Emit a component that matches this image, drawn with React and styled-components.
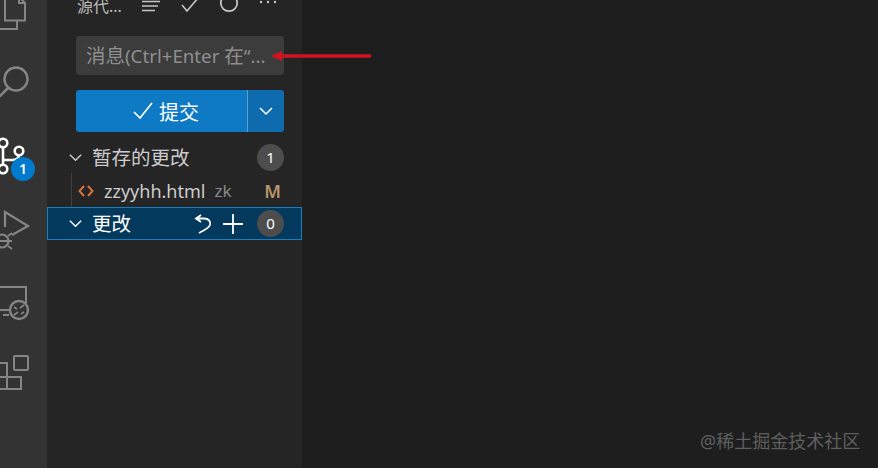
import React from "react";
import styled, { createGlobalStyle } from "styled-components";

const GlobalStyle = createGlobalStyle`
  html, body {
    margin: 0;
    padding: 0;
    height: 100%;
    background: #1e1e1e;
    overflow: hidden;
  }
  #root {
    height: 100%;
  }
`;

const FONT = `"Noto Sans", "Noto Sans CJK SC", sans-serif`;

function ActivityIcon({ height, children }) {
  return (
    <ActivitySvg width="47" height={height} viewBox={`0 0 47 ${height}`} fill="none" stroke="currentColor">
      {children}
    </ActivitySvg>
  );
}

function App() {
  return (
    <>
      <GlobalStyle />
      <Page>
        <ActivityBar>
          <ActivityItem>
            <ActivityIcon height={40}>
              <g strokeWidth="2">
                <path d="M-2 29H17V21" />
                <path d="M5 -3V20.500H25V3L19 -3M19 -3V3H25" />
              </g>
            </ActivityIcon>
          </ActivityItem>
          <ActivityItem>
            <ActivityIcon height={73}>
              <circle cx="16" cy="39" r="11.5" strokeWidth="2.4" />
              <path strokeWidth="2.6" d="M8 48L-2 58" />
            </ActivityIcon>
          </ActivityItem>
          <ActivityItem $active>
            <ActivityIcon height={80}>
              <g strokeWidth="2.6">
                <circle cx="3" cy="30" r="4.300" />
                <circle cx="3" cy="56" r="4.300" />
                <circle cx="19" cy="38" r="4.300" />
                <path d="M3 34V52M3 47H12C16 47 19 45 19 42" />
              </g>
            </ActivityIcon>
            <Badge>1</Badge>
          </ActivityItem>
          <ActivityItem>
            <ActivityIcon height={76}>
              <g strokeWidth="2.200">
                <path d="M5 34V19L28 33L12 42" />
                <circle cx="2" cy="48" r="6.500" />
                <path strokeWidth="1.800" d="M-4 48H12M8 43L12 40M8 53L12 56" />
              </g>
            </ActivityIcon>
          </ActivityItem>
          <ActivityItem>
            <ActivityIcon height={70}>
              <g strokeWidth="2">
                <path d="M-2 18H26V35M-2 41H9M3 46H9" />
                <circle cx="19" cy="41" r="9" strokeWidth="2.400" />
                <path strokeWidth="1.600" d="M20 39L24 36M18 43L14 46M14 38L17 40M24 43L21 45" />
              </g>
            </ActivityIcon>
          </ActivityItem>
          <ActivityItem>
            <ActivityIcon height={70}>
              <g strokeWidth="2">
                <rect x="14" y="17" width="14" height="14" rx="1" />
                <path d="M-2 24H7V50M-2 38H21V50H-2" />
              </g>
            </ActivityIcon>
          </ActivityItem>
        </ActivityBar>

        <SideBar>
          <Header>
            <HeaderTitle>源代...</HeaderTitle>
            <HeaderActions>
              <ToolIcon viewBox="0 0 20 16">
                <path d="M1 2.500H19M1 7H17M1 11.500H14" strokeWidth="1.600" />
              </ToolIcon>
              <ToolIcon viewBox="0 0 20 16">
                <path d="M2 6L7 12L18 -1" strokeWidth="1.600" />
              </ToolIcon>
              <ToolIcon viewBox="0 0 20 16">
                <circle cx="10" cy="4" r="8.200" strokeWidth="1.800" />
              </ToolIcon>
              <ToolIcon viewBox="0 0 20 16">
                <path d="M3 3H3.010M10 3H10.010M17 3H17.010" strokeWidth="2.400" strokeLinecap="round" />
              </ToolIcon>
            </HeaderActions>
          </Header>

          <CommitBox>
            <MessageInput>
              <Cjk>消息</Cjk>(Ctrl+Enter <Cjk>在</Cjk>“...
            </MessageInput>
            <CommitButton>
              <CommitMain>
                <svg width="20" height="18" viewBox="0 0 20 18" fill="none" stroke="#fff" strokeWidth="1.700">
                  <path d="M1 10L7 16L19 1" />
                </svg>
                提交
              </CommitMain>
              <CommitArrow>
                <Chevron $size={16} />
              </CommitArrow>
            </CommitButton>
          </CommitBox>

          <SectionRow>
            <Chevron />
            <SectionTitle>暂存的更改</SectionTitle>
            <CountBadge>1</CountBadge>
          </SectionRow>
          <FileRow>
            <svg width="16" height="14" viewBox="0 0 16 14" fill="none" stroke="#d9703a" strokeWidth="2">
              <path d="M6 2L1.500 7L6 12M10 2L14.500 7L10 12" />
            </svg>
            <FileName>zzyyhh.html</FileName>
            <FileDir>zk</FileDir>
            <FileStatus>M</FileStatus>
          </FileRow>
          <SectionRow $selected>
            <Chevron />
            <SectionTitle>更改</SectionTitle>
            <SectionActions>
              <svg width="20" height="24" viewBox="0 0 20 24" fill="none" stroke="#fff" strokeWidth="1.800">
                <path d="M8 3L3 6.500L8 10M3 6.500H11C16 6.500 18 10 17 13C16 16 10 19 6 21" />
              </svg>
              <svg width="22" height="22" viewBox="0 0 22 22" fill="none" stroke="#fff" strokeWidth="1.800">
                <path d="M11 1V21M1 11H21" />
              </svg>
            </SectionActions>
            <CountBadge>0</CountBadge>
          </SectionRow>
        </SideBar>

        <Editor />
        <Arrow width="102" height="12" viewBox="0 0 102 12">
          <path d="M0 6L11 1V4.300L99 4.300Q102 6 99 7.700L11 7.700V11Z" fill="#cf1420" />
        </Arrow>
        <Watermark>@稀土掘金技术社区</Watermark>
      </Page>
    </>
  );
}

function Chevron({ $size = 15 }) {
  return (
    <ChevronSvg width={$size} height={$size} viewBox="0 0 16 16" fill="none" stroke="currentColor" strokeWidth="1.500">
      <path d="M2 5L8 11L14 5" />
    </ChevronSvg>
  );
}

const Page = styled.div`
  position: relative;
  display: flex;
  width: 878px;
  height: 468px;
  overflow: hidden;
  font-family: ${FONT};
  background: #1e1e1e;
`;

const ActivityBar = styled.div`
  display: flex;
  flex-direction: column;
  flex: none;
  width: 47px;
  background: #333333;
  overflow: hidden;
`;

const ActivityItem = styled.div`
  position: relative;
  flex: none;
  color: ${(p) => (p.$active ? "#ffffff" : "#858585")};
`;

const ActivitySvg = styled.svg`
  display: block;
  overflow: hidden;
`;

const Badge = styled.span`
  position: absolute;
  left: 11px;
  top: 44px;
  width: 24px;
  height: 24px;
  border-radius: 50%;
  background: #007acc;
  color: #fff;
  font-size: 14px;
  font-weight: 600;
  line-height: 24px;
  text-align: center;
`;

const SideBar = styled.div`
  display: flex;
  flex-direction: column;
  flex: none;
  width: 255px;
  background: #252526;
`;

const Header = styled.div`
  display: flex;
  align-items: center;
  height: 10px;
  padding-left: 30px;
  color: #bbbbbb;
`;

const HeaderTitle = styled.span`
  width: 64px;
  font-size: 16px;
  white-space: nowrap;
`;

const HeaderActions = styled.div`
  display: flex;
  align-items: flex-start;
  gap: 19px;
  height: 10px;
`;

const ToolIcon = styled.svg`
  flex: none;
  width: 20px;
  height: 16px;
  fill: none;
  stroke: #c5c5c5;
  margin-top: -1px;
`;

const CommitBox = styled.div`
  display: flex;
  flex-direction: column;
  gap: 15px;
  margin: 26px 18px 0 29px;
`;

const MessageInput = styled.div`
  height: 39px;
  padding-left: 10px;
  background: #3c3c3c;
  border-radius: 3px;
  color: #8f8f8f;
  font-size: 18.7px;
  line-height: 39px;
  white-space: nowrap;
  overflow: hidden;
`;

const Cjk = styled.span`
  font-size: 19.5px;
`;

const CommitButton = styled.div`
  display: flex;
  height: 42px;
  border-radius: 3px;
  overflow: hidden;
  color: #fff;
`;

const CommitMain = styled.div`
  display: flex;
  flex: 1;
  align-items: center;
  justify-content: center;
  gap: 6px;
  padding-left: 9px;
  background: #0e7ac4;
  font-size: 20px;
`;

const CommitArrow = styled.div`
  display: flex;
  flex: none;
  align-items: center;
  justify-content: center;
  width: 36px;
  background: #0e6cae;
  border-left: 1px solid #5a9ecb;
`;

const ChevronSvg = styled.svg`
  display: block;
  flex: none;
`;

const SectionRow = styled.div`
  display: flex;
  align-items: center;
  box-sizing: border-box;
  height: ${(p) => (p.$selected ? "33px" : "32px")};
  margin-top: ${(p) => (p.$selected ? "0" : "9px")};
  padding: 0 17px 0 20px;
  color: ${(p) => (p.$selected ? "#ffffff" : "#cccccc")};
  background: ${(p) => (p.$selected ? "#04395e" : "transparent")};
  border: 1px solid ${(p) => (p.$selected ? "#167fc0" : "transparent")};
`;

const SectionTitle = styled.span`
  flex: 1;
  margin-left: 9px;
  padding-top: 1px;
  font-size: 19.5px;
  line-height: 28px;
  white-space: nowrap;
`;

const SectionActions = styled.div`
  display: flex;
  align-items: center;
  gap: 9px;
  margin-right: 13px;
`;

const CountBadge = styled.span`
  flex: none;
  width: 27px;
  height: 27px;
  border-radius: 50%;
  background: #4d4d4d;
  color: #ffffff;
  font-size: 15px;
  line-height: 27px;
  text-align: center;
`;

const FileRow = styled.div`
  display: flex;
  align-items: center;
  box-sizing: border-box;
  height: 34px;
  margin-left: 24px;
  padding: 1px 21px 0 6px;
  border-left: 1px solid #404040;
`;

const FileName = styled.span`
  margin-left: 10px;
  color: #cccccc;
  font-size: 18px;
`;

const FileDir = styled.span`
  flex: 1;
  margin-left: 9px;
  color: #8a8a8a;
  font-size: 17px;
`;

const FileStatus = styled.span`
  color: #b9976b;
  font-size: 18px;
  font-weight: 600;
`;

const Editor = styled.div`
  flex: 1;
  background: #1e1e1e;
`;

const Arrow = styled.svg`
  position: absolute;
  left: 271px;
  top: 50px;
`;

const Watermark = styled.span`
  position: absolute;
  left: 700px;
  top: 427px;
  color: #5f5f5f;
  font-size: 18px;
  white-space: nowrap;
`;

export default App;
